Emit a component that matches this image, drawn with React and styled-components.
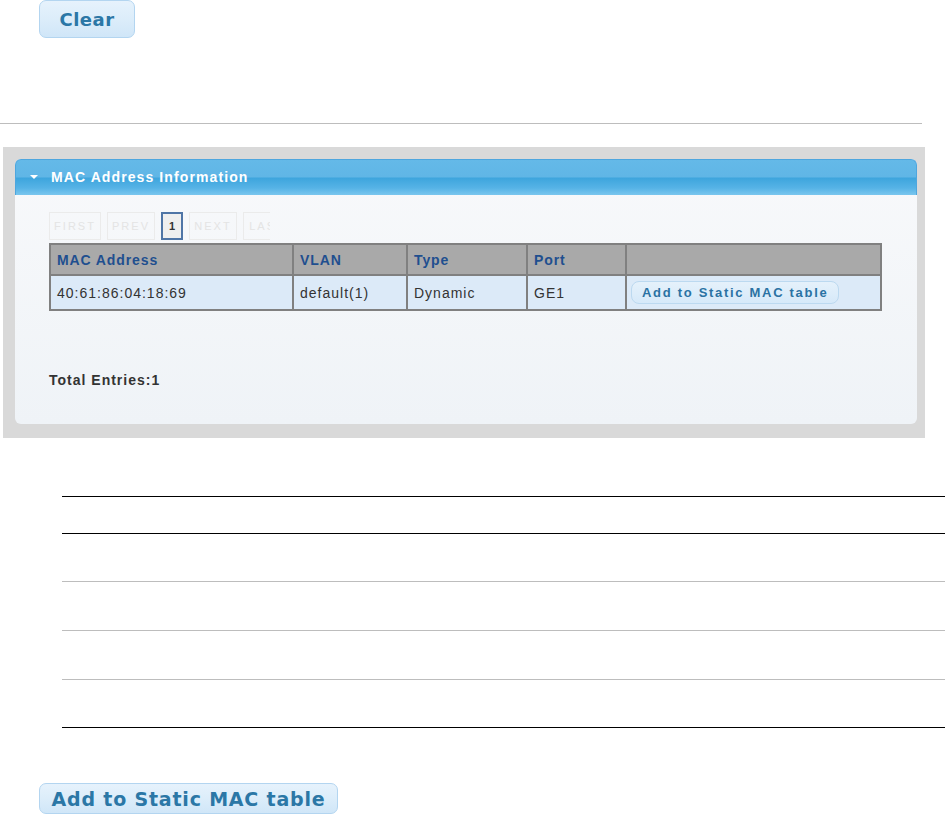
import React from "react";
import styled, { createGlobalStyle } from "styled-components";

const GlobalStyle = createGlobalStyle`
  html, body {
    margin: 0;
    padding: 0;
    background: #ffffff;
    overflow: hidden;
  }
  body {
    font-family: "Liberation Sans", Arial, sans-serif;
  }
`;

const columns = [
  { label: "MAC Address", width: 243 },
  { label: "VLAN", width: 114 },
  { label: "Type", width: 120 },
  { label: "Port", width: 99 },
  { label: "", width: 255 },
];

const rows = [{ mac: "40:61:86:04:18:69", vlan: "default(1)", type: "Dynamic", port: "GE1" }];

const pages = [
  { label: "FIRST", width: 52 },
  { label: "PREV", width: 48 },
  { label: "1", width: 22, active: true },
  { label: "NEXT", width: 48 },
  { label: "LAST", width: 48 },
];

function App() {
  return (
    <>
      <GlobalStyle />
      <Page>
        <TopBar>
          <BigButton $w={96} $h={38} $size={18} $spacing={0.5}>
            Clear
          </BigButton>
        </TopBar>
        <Divider />
        <PanelFrame>
          <Panel>
            <PanelHeader>
              <Caret />
              <PanelTitle>MAC Address Information</PanelTitle>
            </PanelHeader>
            <PanelBody>
              <Pager>
                {pages.map((p) => (
                  <PageBox key={p.label} $w={p.width} $active={p.active}>
                    {p.label}
                  </PageBox>
                ))}
              </Pager>
              <MacTable>
                <colgroup>
                  {columns.map((c, i) => (
                    <col key={i} style={{ width: c.width }} />
                  ))}
                </colgroup>
                <thead>
                  <tr>
                    {columns.map((c, i) => (
                      <Th key={i}>{c.label}</Th>
                    ))}
                  </tr>
                </thead>
                <tbody>
                  {rows.map((r) => (
                    <tr key={r.mac}>
                      <Td>{r.mac}</Td>
                      <Td>{r.vlan}</Td>
                      <Td>{r.type}</Td>
                      <Td>{r.port}</Td>
                      <Td $pad={4}>
                        <SmallButton>Add to Static MAC table</SmallButton>
                      </Td>
                    </tr>
                  ))}
                </tbody>
              </MacTable>
              <Total>Total Entries:1</Total>
            </PanelBody>
          </Panel>
        </PanelFrame>
        <RuleTable>
          <RuleRow $h={37} $line="#000" />
          <RuleRow $h={48} $line="#bdbdbd" />
          <RuleRow $h={49} $line="#bdbdbd" />
          <RuleRow $h={49} $line="#bdbdbd" />
          <RuleRow $h={48} $line="#000" />
        </RuleTable>
        <BottomBar>
          <BigButton $w={299} $h={31} $size={19} $spacing={0.8}>
            Add to Static MAC table
          </BigButton>
        </BottomBar>
      </Page>
    </>
  );
}

const Page = styled.div`
  width: 945px;
  height: 815px;
  position: relative;
`;

const TopBar = styled.div`
  padding: 0 0 0 39px;
  height: 39px;
`;

const BigButton = styled.button`
  width: ${(p) => p.$w}px;
  height: ${(p) => p.$h}px;
  border: 1px solid #b3d5f0;
  border-radius: 7px;
  background: linear-gradient(#e6f2fc 0%, #dcedfa 50%, #d0e6f8 100%);
  color: #2b77a6;
  font-family: "DejaVu Sans", Verdana, sans-serif;
  font-weight: bold;
  font-size: ${(p) => p.$size}px;
  letter-spacing: ${(p) => p.$spacing}px;
  padding: 0;
  cursor: pointer;
`;

const Divider = styled.div`
  width: 922px;
  height: 1px;
  background: #bdbdbd;
  margin-top: 84px;
`;

const PanelFrame = styled.div`
  margin: 23px 0 0 3px;
  width: 922px;
  height: 291px;
  box-sizing: border-box;
  padding: 12px 8px 14px 12px;
  background: #d9d9d9;
`;

const Panel = styled.div`
  height: 100%;
  border-radius: 6px;
  background: linear-gradient(#f8f9fb, #eff3f7);
  display: flex;
  flex-direction: column;
`;

const PanelHeader = styled.div`
  height: 36px;
  box-sizing: border-box;
  border: 1px solid #4ea6de;
  border-bottom: none;
  border-radius: 6px 6px 0 0;
  background: linear-gradient(
    #64b9e8 0%,
    #60b6e6 48%,
    #3ea5dd 52%,
    #56b3e6 80%,
    #7ac6ee 100%
  );
  display: flex;
  align-items: center;
  padding-left: 14px;
`;

const Caret = styled.span`
  width: 0;
  height: 0;
  border-left: 4px solid transparent;
  border-right: 4px solid transparent;
  border-top: 4px solid #ffffff;
  margin-right: 13px;
  margin-top: -2px;
`;

const PanelTitle = styled.span`
  color: #ffffff;
  font-weight: bold;
  font-size: 14px;
  letter-spacing: 1.1px;
  margin-top: -1px;
`;

const PanelBody = styled.div`
  padding: 17px 36px 0 34px;
`;

const Pager = styled.div`
  display: flex;
  gap: 6px;
  width: 221px;
  overflow: hidden;
  height: 28px;
`;

const PageBox = styled.div`
  flex: none;
  width: ${(p) => p.$w}px;
  height: 28px;
  box-sizing: border-box;
  border: ${(p) => (p.$active ? "2px solid #4f75a6" : "1px solid #ebebeb")};
  background: ${(p) => (p.$active ? "#efefef" : "transparent")};
  color: ${(p) => (p.$active ? "#333333" : "#e4e4e4")};
  font-size: 11px;
  letter-spacing: ${(p) => (p.$active ? "0" : "2px")};
  font-weight: ${(p) => (p.$active ? "bold" : "normal")};
  display: flex;
  align-items: center;
  justify-content: center;
`;

const MacTable = styled.table`
  margin-top: 3px;
  width: 831px;
  table-layout: fixed;
  border-collapse: collapse;
  border: 2px solid #808080;
`;

const Th = styled.th`
  height: 29px;
  padding: 0 6px;
  background: #a9a9a9;
  border: 2px solid #808080;
  color: #1f4f8f;
  font-size: 14px;
  letter-spacing: 0.9px;
  text-align: left;
  font-weight: bold;
`;

const Td = styled.td`
  height: 33px;
  padding: 0 ${(p) => p.$pad ?? 6}px;
  background: #dceaf8;
  border: 2px solid #808080;
  color: #333333;
  font-size: 14px;
  letter-spacing: 1px;
  white-space: nowrap;
`;

const SmallButton = styled.button`
  height: 23px;
  padding: 0 10px;
  border: 1px solid #bcd9f0;
  border-radius: 8px;
  background: linear-gradient(#e5f1fb, #d6e9f9);
  color: #2b72a3;
  font-family: "Liberation Sans", Arial, sans-serif;
  font-weight: bold;
  font-size: 13px;
  letter-spacing: 1.7px;
  cursor: pointer;
`;

const Total = styled.div`
  margin-top: 61px;
  color: #333333;
  font-weight: bold;
  font-size: 14px;
  letter-spacing: 1px;
`;

const RuleTable = styled.div`
  margin: 58px 0 0 62px;
  border-top: 1px solid #000000;
`;

const RuleRow = styled.div`
  height: ${(p) => p.$h - 1}px;
  border-bottom: 1px solid ${(p) => p.$line};
`;

const BottomBar = styled.div`
  margin-top: 55px;
  padding-left: 39px;
`;

export default App;
